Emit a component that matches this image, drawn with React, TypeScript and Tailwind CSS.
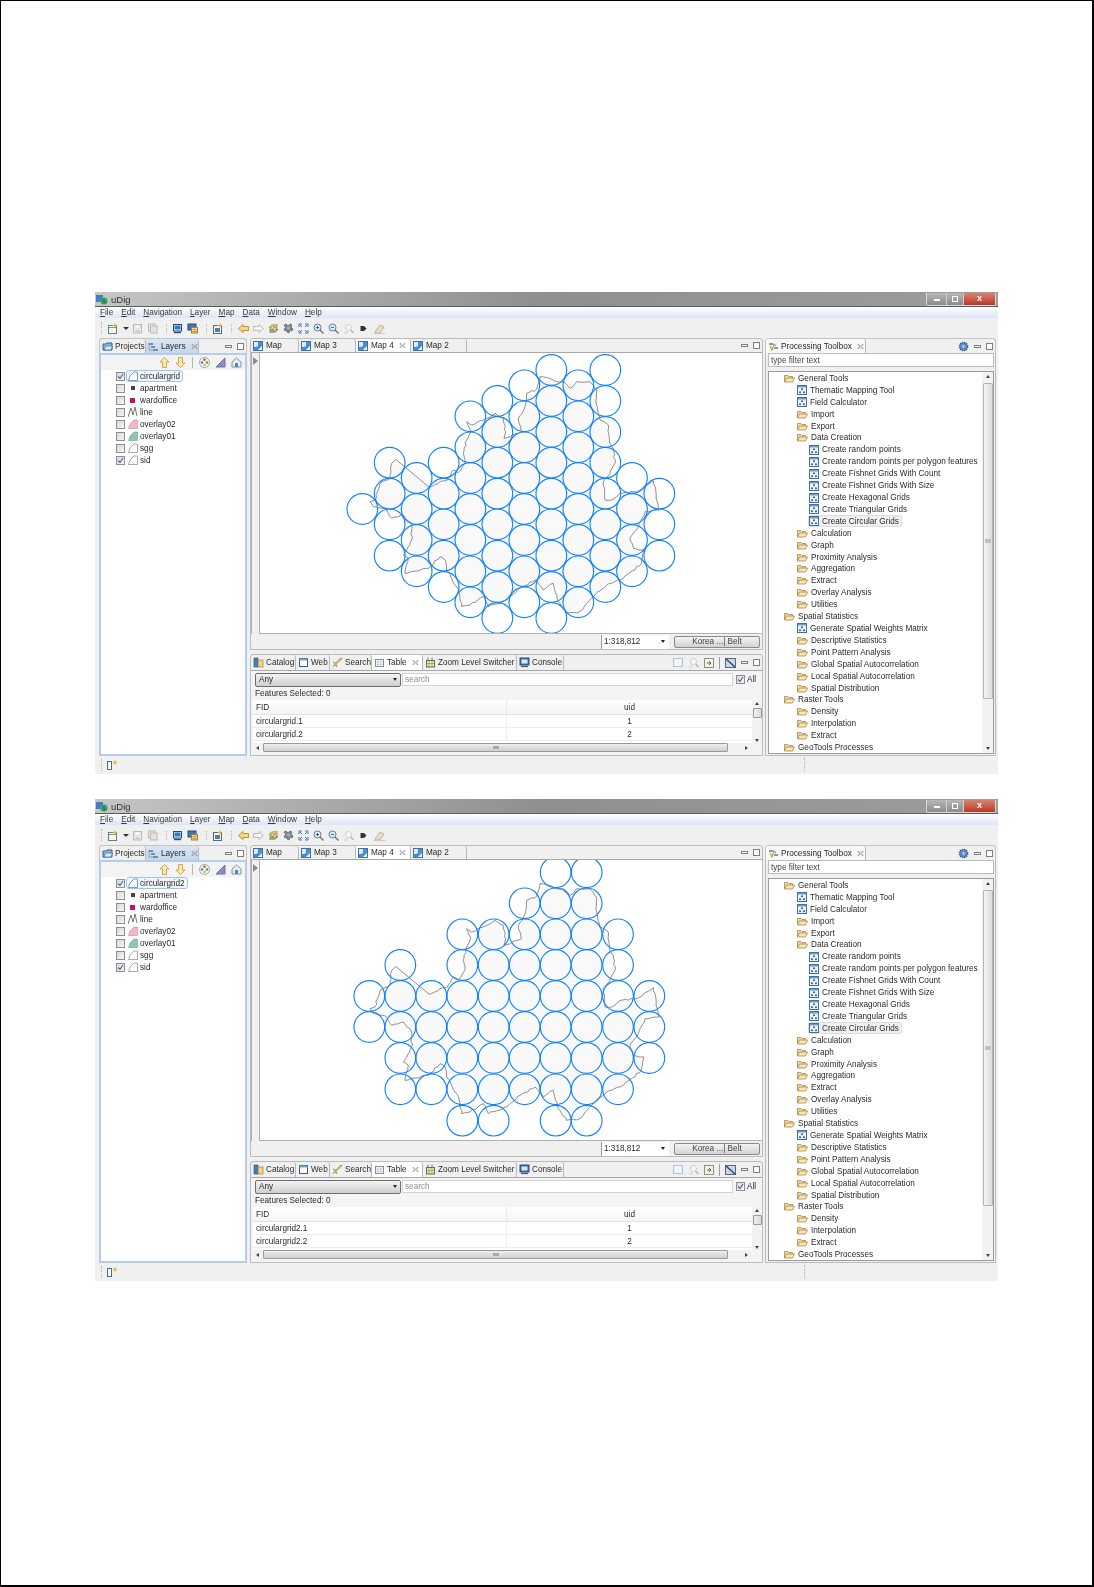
import React from "react";

const boundary: [number, number][] = [
  [167,358],[268,442],[300,425],[322,420],[340,390],[355,398],[375,368],[370,340],[380,300],[392,272],[380,245],[395,255],[430,240],[465,220],[490,235],[497,275],[492,295],[545,275],[535,235],[555,200],[560,160],[590,148],[600,110],[630,115],[650,125],[670,125],[690,145],[710,125],[750,125],[770,150],[770,195],[780,240],[805,255],[810,310],[820,325],[825,370],[810,400],[790,425],[795,480],[815,480],[840,460],[890,455],[940,422],[958,510],[915,515],[895,560],[870,595],[880,625],[912,630],[905,670],[850,715],[800,735],[760,770],[720,815],[680,820],[655,785],[640,730],[610,750],[585,720],[540,745],[500,780],[445,800],[430,770],[390,795],[365,800],[355,750],[320,690],[315,660],[300,650],[265,685],[195,700],[205,655],[190,645],[215,600],[215,555],[190,525],[155,535],[140,510],[100,500],[90,485],[105,480],[120,430],[150,415],[155,370],
];

function jagged(points: [number, number][]) {
  let d = `M${points[0][0]} ${points[0][1]}`;
  let seed = 1;
  for (let i = 0; i < points.length; i++) {
    const [x0, y0] = points[i];
    const [x1, y1] = points[(i + 1) % points.length];
    const len = Math.hypot(x1 - x0, y1 - y0);
    const steps = i === 0 ? 1 : Math.max(1, Math.round(len / 9));
    for (let s = 1; s <= steps; s++) {
      seed = (seed * 37 + 11) % 101;
      const t = s / steps;
      const j = s === steps ? 0 : (seed / 101 - 0.5) * 5;
      const nx = len ? -(y1 - y0) / len : 0;
      const ny = len ? (x1 - x0) / len : 0;
      d += `L${(x0 + (x1 - x0) * t + nx * j).toFixed(1)} ${(y0 + (y1 - y0) * t + ny * j).toFixed(1)}`;
    }
  }
  return d + "Z";
}
const boundaryPath = jagged(boundary);

const grid1: [number, number[]][] = [
  [67,[507]],
  [149,[368,461,553,647]],
  [230,[414,507,600,694]],
  [311,[368,461,553,647,741]],
  [391,[229,322,414,507,600,694,787]],
  [472,[183,276,368,461,553,647,741,834]],
  [553,[136,229,322,414,507,600,694,787]],
  [634,[90,183,276,368,461,553,647,741,834]],
  [715,[136,229,322,414,507,600,694,787]],
  [796,[90,183,276,368,461,553,647,741]],
  [876,[414,507,600,694]],
  [958,[461,553,647]],
];
const grid2: [number, number[]][] = [
  [88,[447,540]],
  [181,[354,447,540,633,727]],
  [274,[447,540,633,727]],
  [367,[262,354,447,540,633,727,821]],
  [461,[262,354,447,540,633,727,821]],
  [554,[169,262,354,447,540,633,727]],
  [647,[76,169,262,354,447,540,633,727,821]],
  [740,[76,169,262,354,447,540,633,727,821]],
  [834,[262,354,447,540,633,727]],
  [928,[447,540,633]],
];

function MapDrawing({ grid }: { grid: [number, number[]][] }) {
  return (
    <svg viewBox="0 0 1080 900" width={360} height={300} className="absolute left-[80px] top-[-13px]">
      <path d={boundaryPath} fill="#f9f9f9" stroke="#7c7c7c" strokeWidth={2.6} strokeLinejoin="round" />
      {grid.map(([x, ys]) =>
        ys.map((y) => <circle key={`${x}-${y}`} cx={x} cy={y} r={46} fill="none" stroke="#1483fa" strokeWidth={3.4} />)
      )}
    </svg>
  );
}

const MapIcon = () => (
  <svg width={11} height={10} viewBox="0 0 11 10" className="shrink-0">
    <rect x=".5" y=".5" width="9" height="9" fill="#fff" stroke="#4a6f96" />
    <path d="M1 9V6L5 5V1H9V5L5 9Z" fill="#3f92dc" />
    <path d="M1 1H5V5L1 6Z" fill="#dfeaf5" />
  </svg>
);
const Folder = () => (
  <svg width={11} height={9} viewBox="0 0 11 9" className="shrink-0">
    <path d="M.5 8V1.5H4L5 2.5H8.5V4" fill="#f2d89a" stroke="#a8874a" strokeWidth=".8" />
    <path d="M.5 8L2.5 4H10.5L8.5 8Z" fill="#f8e6b4" stroke="#a8874a" strokeWidth=".8" />
  </svg>
);
const ToolIcon = () => (
  <svg width={10} height={10} viewBox="0 0 10 10" className="shrink-0">
    <rect x=".5" y=".5" width="9" height="9" fill="#eef4fa" stroke="#3c70a4" />
    <rect x="1" y="1" width="8" height="1.5" fill="#6f9bc8" />
    <circle cx="5" cy="4.3" r="1" fill="#2b5c92" />
    <circle cx="3" cy="7.3" r="1" fill="#2b5c92" />
    <circle cx="7" cy="7.3" r="1" fill="#2b5c92" />
  </svg>
);
const Check = ({ on }: { on: boolean }) => (
  <span className="w-[9px] h-[9px] shrink-0 border border-[#8e8f8f] bg-gradient-to-br from-[#d8d8d8] to-[#f6f6f6] flex items-center justify-center">
    {on && (
      <svg width={7} height={7} viewBox="0 0 7 7">
        <path d="M1 3.5L3 5.5L6 1" fill="none" stroke="#4a5f97" strokeWidth="1.1" />
      </svg>
    )}
  </span>
);
const CloseX = () => (
  <svg width={7} height={7} viewBox="0 0 7 7" className="shrink-0">
    <path d="M1 1L3.5 3L6 1L6 2L4.2 3.5L6 5V6L3.5 4L1 6V5L2.8 3.5L1 2Z" fill="none" stroke="#8a8a8a" strokeWidth=".6" />
  </svg>
);
const MinMax = () => (
  <span className="flex items-center gap-[5px]">
    <span className="w-[7px] h-[3px] border border-[#7f7f7f] bg-white" />
    <span className="w-[7px] h-[7px] border border-[#7f7f7f] bg-white" />
  </span>
);
const Dots = () => <span className="w-0 h-[12px] border-l border-dotted border-[#b5b5b5] shrink-0" />;

/* Toolbar drawings */
const Ic = ({ children, w = 11 }: { children: React.ReactNode; w?: number }) => (
  <svg width={w} height={11} viewBox={`0 0 ${w} 11`} className="shrink-0">{children}</svg>
);
const NewIc = () => <Ic><rect x="1.5" y="2.5" width="8" height="8" fill="#fdf6d8" stroke="#5c7fa6" /><path d="M2 4.5H9" stroke="#6c93bb" /><path d="M8 0L9 2L11 2.5L9 3L8 5L7 3L5 2.5L7 2Z" fill="#e8b23c" /></Ic>;
const SaveIc = () => <Ic><rect x="1.5" y="1.5" width="8" height="8.5" fill="#ececec" stroke="#b9b9b9" /><rect x="3" y="2" width="5" height="3" fill="#fff" stroke="#c8c8c8" strokeWidth=".5" /><rect x="3.5" y="7" width="4" height="3" fill="#cfcfcf" /></Ic>;
const SaveAllIc = () => <Ic><rect x="1.5" y="1" width="6.5" height="7" fill="#ececec" stroke="#b9b9b9" /><rect x="3.5" y="3" width="6.5" height="7" fill="#e4e4e4" stroke="#b9b9b9" /></Ic>;
const MonIc = () => <Ic><rect x="1.5" y="1.5" width="8" height="6.5" fill="#eaf3fb" stroke="#1f4f85" /><rect x="2.5" y="2.5" width="6" height="4" fill="#3d78b5" /><path d="M2 9.5H9" stroke="#1f4f85" strokeWidth="1.4" /></Ic>;
const Mon2Ic = () => <Ic><rect x="1" y="1" width="8" height="6" fill="#3d78b5" stroke="#1f4f85" /><rect x="4.5" y="4.5" width="6" height="5.5" fill="#f4d98e" stroke="#a27f3a" /><path d="M5.5 6.5H9.5M5.5 8.5H9.5" stroke="#8b6d30" strokeWidth=".6" /></Ic>;
const TaskIc = () => <Ic><rect x="1.5" y="2.5" width="8" height="8" fill="#fff6cf" stroke="#506a8a" /><rect x="3" y="5" width="5" height="4" fill="#3e82c8" /><path d="M8 0L9 2L11 2.5L9 3L8 5L7 3L5 2.5L7 2Z" fill="#e8b23c" /></Ic>;
const BackIc = () => <Ic><path d="M.5 5.5L5 1.5V3.5H10.5V7.5H5V9.5Z" fill="#f8d97c" stroke="#b98a2c" strokeWidth=".9" /></Ic>;
const FwdIc = () => <Ic><path d="M10.5 5.5L6 1.5V3.5H.5V7.5H6V9.5Z" fill="#f3f3f3" stroke="#b4b4b4" strokeWidth=".9" /></Ic>;
const RefreshIc = () => <Ic><path d="M1 5C2 2 5 1 8 2L9 1V5H5L6.5 3.5C5 3 3.5 3.5 3 5Z" fill="#ecc25a" stroke="#9a7a2c" strokeWidth=".6" /><path d="M10 6C9 9 6 10 3 9L2 10V6H6L4.5 7.5C6 8 7.5 7.5 8 6Z" fill="#9fb06a" stroke="#6e7d3c" strokeWidth=".6" /></Ic>;
const CogIc = () => <Ic><path d="M1 2L3 1L5 3L7 1L9 2L8 4L10 6L9 8L7 7L6 10L4 9L4 7L2 8L1 6L3 5Z" fill="#7f8b93" stroke="#55606a" strokeWidth=".7" /><circle cx="5.5" cy="5" r="1.4" fill="#a8b4bc" /></Ic>;
const ExpandIc = () => <Ic><path d="M1 4V1H4M7 1H10V4M10 7V10H7M4 10H1V7M2 2L4 4M9 2L7 4M2 9L4 7M9 9L7 7" fill="none" stroke="#3a79bd" strokeWidth="1" /></Ic>;
const ZoomInIc = () => <Ic><circle cx="4.5" cy="4.5" r="3.5" fill="#dcebf8" stroke="#5e7f9e" /><path d="M3 4.5H6M4.5 3V6" stroke="#2b5c92" strokeWidth=".9" /><path d="M7 7L10.5 10.5" stroke="#7d7060" strokeWidth="1.4" /></Ic>;
const ZoomOutIc = () => <Ic><circle cx="4.5" cy="4.5" r="3.5" fill="#dcebf8" stroke="#5e7f9e" /><path d="M3 4.5H6" stroke="#2b5c92" strokeWidth=".9" /><path d="M7 7L10.5 10.5" stroke="#7d7060" strokeWidth="1.4" /></Ic>;
const ZoomSelIc = () => <Ic><circle cx="5.5" cy="4.5" r="3" fill="#f5f5f5" stroke="#a9a9a9" strokeDasharray="1 1" /><path d="M7.5 7L10.5 10" stroke="#b0b0b0" strokeWidth="1.2" /><path d="M1 10H4V7" fill="none" stroke="#b8b8b8" strokeDasharray="1 1" /></Ic>;
const TagIc = () => <Ic w={7}><path d="M.5 3H4L6.5 5.5L4 8H.5Z" fill="#333" /></Ic>;
const EraserIc = () => <Ic><path d="M1 9L6 2L10 4L6 10H2Z" fill="#e8dccb" stroke="#b4a48c" strokeWidth=".8" /><path d="M0 10.5H11" stroke="#cfc6b6" /></Ic>;
const Triangle = () => <Ic><path d="M1 10L10 1V10Z" fill="#8a8fc2" stroke="#6c70a6" /></Ic>;
const Palette = () => <Ic><circle cx="5.5" cy="5.5" r="5" fill="#f5f5f5" stroke="#9aa" /><circle cx="5.5" cy="2.8" r="1.2" fill="#e33" /><circle cx="3" cy="5.5" r="1.2" fill="#2a7de1" /><circle cx="8" cy="5.5" r="1.2" fill="#2cb34a" /><circle cx="5.5" cy="8" r="1.2" fill="#e5b825" /></Ic>;
const HouseIc = () => <Ic><path d="M1 5L5.5 1L10 5V10H1Z" fill="#e9eef4" stroke="#7f93a8" /><rect x="4" y="6" width="3" height="4" fill="#4d86c0" /></Ic>;
const ArrowUp = () => <Ic><path d="M5.5 .5L10 5H7.5V10.5H3.5V5H1Z" fill="#fbe7a6" stroke="#c29a3c" strokeWidth=".8" /></Ic>;
const ArrowDown = () => <Ic><path d="M5.5 10.5L10 6H7.5V.5H3.5V6H1Z" fill="#fbe7a6" stroke="#c29a3c" strokeWidth=".8" /></Ic>;
const LayersIc = () => <Ic><path d="M1 2H5V4H1ZM3 5H7V7H3ZM5 8H10V10H5Z" fill="#6f8faf" /><path d="M1 2V9H5" fill="none" stroke="#7a8a99" strokeWidth=".7" /></Ic>;
const ProjectsIc = () => <Ic><path d="M1 9V3H4L5 2H10V9Z" fill="#8bb6e2" stroke="#2f5f95" /><path d="M2 9L3.5 5H10.5L9 9Z" fill="#d5e6f7" stroke="#2f5f95" strokeWidth=".6" /></Ic>;
const CatalogIc = () => <Ic><rect x="1" y="1" width="4" height="9" fill="#4a7fb5" stroke="#1f4f85" strokeWidth=".6" /><rect x="5" y="3" width="5" height="7" fill="#f3d388" stroke="#8d7134" strokeWidth=".6" /></Ic>;
const WebIc = () => <Ic><rect x="1.5" y="1.5" width="8" height="8" fill="#fff" stroke="#3b5f88" /><rect x="1.5" y="1.5" width="8" height="2" fill="#7aa3cd" /></Ic>;
const SearchIc = () => <Ic><path d="M1 10L3 8L5 10L4 7L9 3L10 1L8 1.5L4 6L1 5L3 7Z" fill="#e5c46c" stroke="#a0803a" strokeWidth=".6" /></Ic>;
const TableIc = () => <Ic><rect x="1.5" y="2.5" width="8" height="7" fill="#fff" stroke="#7d8b99" /><path d="M1.5 5H9.5M1.5 7.3H9.5M4 2.5V9.5M6.7 2.5V9.5" stroke="#a7b3bf" strokeWidth=".6" /></Ic>;
const ZoomLvlIc = () => <Ic><rect x="1.5" y="3.5" width="8" height="6.5" fill="#f2e6b6" stroke="#6a6a48" /><path d="M1.5 6.5H9.5M4 3.5V10M7 3.5V10" stroke="#7c8a5c" strokeWidth=".6" /><path d="M3 .5V3M7 .5V3" stroke="#5b7aa0" /></Ic>;
const ConsoleIc = () => <Ic><rect x="1" y="1" width="9" height="7" fill="#3f72aa" stroke="#1f4f85" /><rect x="2.5" y="2.5" width="6" height="4" fill="#dbe9f6" /><path d="M2 9.5H9" stroke="#555" strokeWidth="1.2" /></Ic>;
const GearIc = () => <Ic><circle cx="5.5" cy="5.5" r="4" fill="#5f8fc9" stroke="#34639e" strokeDasharray="1.4 .7" strokeWidth="1.6" /><circle cx="5.5" cy="5.5" r="1.4" fill="#a7c7e8" /></Ic>;
const ProcIc = () => <Ic><path d="M1 2H5V4H1ZM6 6H10V8H6Z" fill="#6da0cf" /><path d="M2 5L4 9L6 3L8 5" fill="none" stroke="#c59a3a" strokeWidth="1.1" /></Ic>;

function Tab({ label, icon, w, active, close, tone }: { label: string; icon: React.ReactNode; w: string; active?: boolean; close?: boolean; tone?: string }) {
  return (
    <div className={`${w} h-full shrink-0 flex items-center gap-[2px] pl-[2px] border-r border-[#b8b8b8] rounded-tr-[3px] ${active ? (tone ?? "bg-white") : ""}`}>
      {icon}
      <span className="whitespace-nowrap">{label}</span>
      {close && <span className="ml-[3px]"><CloseX /></span>}
    </div>
  );
}

function Under({ t }: { t: string }) {
  return <span><span className="underline">{t[0]}</span>{t.slice(1)}</span>;
}

const layers: [string, React.ReactNode][] = [
  ["apartment", <span className="w-[4px] h-[4px] bg-[#444] mx-[3px]" />],
  ["wardoffice", <span className="w-[5px] h-[5px] bg-[#b8186c] mx-[3px]" />],
  ["line", <svg width={10} height={10} viewBox="0 0 10 10"><path d="M0 10L3 1L5 8L7 0L9 9" fill="none" stroke="#666" strokeWidth=".9" /></svg>],
  ["overlay02", <svg width={10} height={10} viewBox="0 0 10 10"><path d="M.5 9.5L2 5L6 1H9.5V9.5Z" fill="#f4b5cf" stroke="#a87" strokeWidth=".5" /></svg>],
  ["overlay01", <svg width={10} height={10} viewBox="0 0 10 10"><path d="M.5 9.5L2 5L6 1H9.5V9.5Z" fill="#8fc8a8" stroke="#789" strokeWidth=".5" /></svg>],
  ["sgg", <svg width={10} height={10} viewBox="0 0 10 10"><path d="M.5 9.5L2 5L6 1H9.5V9.5Z" fill="#fff" stroke="#888" strokeWidth=".7" /></svg>],
  ["sid", <svg width={10} height={10} viewBox="0 0 10 10"><path d="M.5 9.5L2 5L6 1H9.5V9.5Z" fill="#fff" stroke="#888" strokeWidth=".7" /></svg>],
];

const tree: [number, "f" | "t", string, boolean?][] = [
  [0,"f","General Tools"],[1,"t","Thematic Mapping Tool"],[1,"t","Field Calculator"],[1,"f","Import"],[1,"f","Export"],[1,"f","Data Creation"],
  [2,"t","Create random points"],[2,"t","Create random points per polygon features"],[2,"t","Create Fishnet Grids With Count"],[2,"t","Create Fishnet Grids With Size"],[2,"t","Create Hexagonal Grids"],[2,"t","Create Triangular Grids"],[2,"t","Create Circular Grids",true],
  [1,"f","Calculation"],[1,"f","Graph"],[1,"f","Proximity Analysis"],[1,"f","Aggregation"],[1,"f","Extract"],[1,"f","Overlay Analysis"],[1,"f","Utilities"],
  [0,"f","Spatial Statistics"],[1,"t","Generate Spatial Weights Matrix"],[1,"f","Descriptive Statistics"],[1,"f","Point Pattern Analysis"],[1,"f","Global Spatial Autocorrelation"],[1,"f","Local Spatial Autocorrelation"],[1,"f","Spatial Distribution"],
  [0,"f","Raster Tools"],[1,"f","Density"],[1,"f","Interpolation"],[1,"f","Extract"],[0,"f","GeoTools Processes"],
];
const indentClass = ["pl-[15px]", "pl-[28px]", "pl-[40px]"];

function UDigWindow({ layerName, grid }: { layerName: string; grid: [number, number[]][] }) {
  return (
    <div className="w-[903px] h-[482px] shrink-0 flex flex-col bg-[#f0f0f0] text-[#2a2a2a] text-[8.2px] leading-[11px] font-['Liberation_Sans',sans-serif] blur-[0.4px]">
      {/* title bar */}
      <div className="h-[15px] shrink-0 flex items-center pl-[1px] border-b border-[#5c5c5c] bg-gradient-to-r from-[#c6c6c6] via-[#8f8f8f] to-[#9d9d9d]">
        <svg width={12} height={11} viewBox="0 0 12 11">
          <rect x="0" y="1" width="7" height="7" fill="#3f7fc4" />
          <circle cx="8" cy="7" r="3.6" fill="#3da65a" />
          <path d="M6 6L10 8M8 4V10" stroke="#1f5f8a" strokeWidth=".7" />
        </svg>
        <span className="ml-[3px] text-[#333] text-[9.5px]">uDig</span>
        <div className="ml-auto mr-[2px] flex h-[13px] items-stretch rounded-b-[2px] border border-t-0 border-[#d8d8d8]">
          <div className="w-[19px] flex items-end justify-center pb-[4px] bg-gradient-to-b from-[#b8b8b8] to-[#8c8c8c]"><span className="w-[6px] h-[2px] bg-white" /></div>
          <div className="w-[18px] flex items-center justify-center border-x border-[#cfcfcf] bg-gradient-to-b from-[#b8b8b8] to-[#8c8c8c]"><span className="w-[6px] h-[6px] border border-white" /></div>
          <div className="w-[31px] flex items-center justify-center text-white text-[9px] font-bold bg-gradient-to-b from-[#d9826f] to-[#b8362a]">x</div>
        </div>
      </div>
      {/* menu */}
      <div className="h-[11px] shrink-0 flex items-center pl-[5px] gap-[8px] bg-gradient-to-b from-[#ffffff] to-[#dde4f6] text-[#3a3a3a]">
        {["File","Edit","Navigation","Layer","Map","Data","Window","Help"].map((m) => <Under key={m} t={m} />)}
      </div>
      {/* toolbar */}
      <div className="h-[20px] shrink-0 flex items-center pl-[6px]">
        <Dots />
        <span className="flex items-center gap-[5px] ml-[5px]"><NewIc /><span className="w-0 h-0 border-x-[3px] border-x-transparent border-t-[3px] border-t-[#333]" /></span>
        <span className="flex items-center gap-[4px] ml-[3px]"><SaveIc /><SaveAllIc /></span>
        <span className="ml-[8px]"><Dots /></span>
        <span className="flex items-center gap-[4px] ml-[5px]"><MonIc /><Mon2Ic /></span>
        <span className="ml-[8px]"><Dots /></span>
        <span className="ml-[5px]"><TaskIc /></span>
        <span className="ml-[8px]"><Dots /></span>
        <span className="flex items-center gap-[4px] ml-[6px]"><BackIc /><FwdIc /><RefreshIc /><CogIc /><ExpandIc /><ZoomInIc /><ZoomOutIc /><ZoomSelIc /></span>
        <span className="ml-[6px]"><TagIc /></span>
        <span className="ml-[7px]"><EraserIc /></span>
      </div>
      {/* panes */}
      <div className="h-[418px] shrink-0 flex pl-[4px]">
        {/* left */}
        <div className="w-[148px] shrink-0 flex flex-col">
          <div className="h-[15px] shrink-0 flex items-center rounded-t-[3px] border-x border-t border-[#c4c4c4]">
            <Tab w="w-[46px]" label="Projects" icon={<ProjectsIc />} />
            <Tab w="w-[53px]" label="Layers" icon={<LayersIc />} close active tone="bg-gradient-to-b from-[#d9e6f4] to-[#c3d7ec]" />
            <span className="ml-auto mr-[2px]"><MinMax /></span>
          </div>
          <div className="flex-1 border-2 border-[#b5cde8] bg-white flex flex-col">
            <div className="h-[15px] shrink-0 bg-[#f3f3f3] flex items-center justify-end pr-[3px] gap-[5px]">
              <ArrowUp /><ArrowDown /><span className="h-[11px] border-l border-[#b5b5b5] mx-[1px]" /><Palette /><Triangle /><HouseIc />
            </div>
            <div className="flex flex-col pl-[15px]">
              <div className="h-[12px] flex items-center gap-[1px]">
                <Check on />
                <span className="flex items-center gap-[2px] h-[12px] pl-[1px] pr-[2px] rounded-[3px] border border-[#9fc3ea] bg-[#f1f7fd]">
                  <svg width={10} height={10} viewBox="0 0 10 10"><path d="M.5 9.5L2 5L6 1H9.5V9.5Z" fill="#fff" stroke="#3f8fe0" strokeWidth=".8" /></svg>
                  <span>{layerName}</span>
                </span>
              </div>
              {layers.map(([name, ic], i) => (
                <div key={name} className="h-[12px] flex items-center gap-[1px]">
                  <Check on={i === 6} />
                  <span className="w-[11px] flex items-center justify-center ml-[1px]">{ic}</span>
                  <span className="ml-[1px]">{name}</span>
                </div>
              ))}
            </div>
          </div>
        </div>
        {/* center */}
        <div className="w-[513px] ml-[3px] shrink-0 flex flex-col gap-[4px]">
          <div className="h-[312px] shrink-0 flex flex-col border border-[#bcbcbc] rounded-t-[3px]">
            <div className="h-[14px] shrink-0 flex items-center border-b border-[#a8a8a8]">
              <Tab w="w-[48px]" label="Map" icon={<MapIcon />} />
              <Tab w="w-[57px]" label="Map 3" icon={<MapIcon />} />
              <Tab w="w-[55px]" label="Map 4" icon={<MapIcon />} close active />
              <Tab w="w-[56px]" label="Map 2" icon={<MapIcon />} />
              <span className="ml-auto mr-[2px]"><MinMax /></span>
            </div>
            <div className="flex-1 flex flex-col bg-white min-h-0">
              <div className="flex-1 flex min-h-0">
                <div className="w-[9px] shrink-0 flex justify-center pt-[4px] bg-[#f0f0f0] border-x border-[#b0b0b0]">
                  <span className="w-0 h-0 border-y-[4px] border-y-transparent border-l-[5px] border-l-[#8c8c8c]" />
                </div>
                <div className="flex-1 relative overflow-hidden bg-white border-b border-[#b0b0b0]">
                  <MapDrawing grid={grid} />
                </div>
              </div>
              <div className="h-[15px] shrink-0 bg-[#f0f0f0] flex items-center justify-end pr-[2px]">
                <div className="w-[68px] h-[14px] flex items-center justify-between px-[2px] bg-white border-l border-[#9a9a9a]">
                  <span>1:318,812</span>
                  <span className="w-0 h-0 border-x-[2.5px] border-x-transparent border-t-[3px] border-t-[#222] mr-[2px]" />
                </div>
                <div className="w-[86px] h-[12px] ml-[5px] flex items-center justify-center rounded-[2px] border border-[#8a8a8a] bg-gradient-to-b from-[#f4f4f4] to-[#d2d2d2] text-[#444]">Korea ...| Belt</div>
              </div>
            </div>
          </div>
          <div className="h-[102px] shrink-0 flex flex-col border border-[#bcbcbc] rounded-t-[3px]">
            <div className="h-[16px] shrink-0 flex items-center border-b border-[#a8a8a8]">
              <Tab w="w-[45px]" label="Catalog" icon={<CatalogIc />} />
              <Tab w="w-[34px]" label="Web" icon={<WebIc />} />
              <Tab w="w-[42px]" label="Search" icon={<SearchIc />} />
              <Tab w="w-[51px]" label="Table" icon={<TableIc />} close active />
              <Tab w="w-[94px]" label="Zoom Level Switcher" icon={<ZoomLvlIc />} />
              <Tab w="w-[47px]" label="Console" icon={<ConsoleIc />} />
              <span className="ml-auto flex items-center gap-[5px] mr-[2px]">
                <svg width={10} height={9} viewBox="0 0 10 9"><rect x=".5" y=".5" width="9" height="8" fill="#eef5fb" stroke="#6f8fb2" strokeDasharray="1 1" /></svg>
                <ZoomSelIc />
                <svg width={10} height={10} viewBox="0 0 10 10"><rect x=".5" y=".5" width="9" height="9" fill="#fbf3cf" stroke="#8a8f96" /><path d="M3 5H7M5 3L7 5L5 7" stroke="#2e6da8" fill="none" /></svg>
                <span className="h-[12px] border-l border-[#a0a0a0]" />
                <svg width={11} height={10} viewBox="0 0 11 10"><rect x=".5" y=".5" width="10" height="9" fill="#cdd6e0" stroke="#4f6a88" /><path d="M1 1L10 9" stroke="#28466a" strokeWidth="1.3" /></svg>
                <MinMax />
              </span>
            </div>
            <div className="flex-1 flex flex-col bg-[#f4f4f4] min-h-0">
              <div className="h-[15px] shrink-0 flex items-center pl-[4px] mt-[1px]">
                <div className="w-[146px] h-[14px] flex items-center justify-between pl-[3px] pr-[3px] rounded-[2px] border border-[#6f6f6f] bg-gradient-to-b from-[#f4f4f4] to-[#cfcfcf]">
                  <span>Any</span>
                  <span className="w-0 h-0 border-x-[2.5px] border-x-transparent border-t-[3px] border-t-[#222]" />
                </div>
                <div className="w-[331px] h-[13px] ml-[1px] flex items-center pl-[2px] bg-white border border-[#d4d4d4] text-[#8e8e8e]">search</div>
                <span className="ml-[3px] flex items-center gap-[2px]"><Check on /><span>All</span></span>
              </div>
              <div className="h-[13px] shrink-0 flex items-center pl-[4px]">Features Selected: 0</div>
              <div className="flex-1 flex min-h-0 pl-[2px]">
                <div className="w-[499px] shrink-0 flex flex-col bg-white">
                  <div className="h-[15px] shrink-0 flex items-center bg-gradient-to-b from-[#ffffff] to-[#f2f4f6] border-b border-[#e3e3e3]">
                    <div className="w-[254px] pl-[3px] border-r border-[#eaeaea] h-full flex items-center">FID</div>
                    <div className="flex-1 text-center">uid</div>
                  </div>
                  <div className="h-[13px] shrink-0 flex items-center border-b border-[#eeeeee]">
                    <div className="w-[254px] pl-[3px] h-full flex items-center border-r border-[#eeeeee]">{layerName}.1</div>
                    <div className="flex-1 text-center">1</div>
                  </div>
                  <div className="h-[13px] shrink-0 flex items-center border-b border-[#eeeeee]">
                    <div className="w-[254px] pl-[3px] h-full flex items-center border-r border-[#eeeeee]">{layerName}.2</div>
                    <div className="flex-1 text-center">2</div>
                  </div>
                </div>
                <div className="w-[10px] shrink-0 flex flex-col items-center bg-[#f2f2f2] h-[44px] pt-[2px]">
                  <span className="w-0 h-0 border-x-[2px] border-x-transparent border-b-[3px] border-b-[#444]" />
                  <span className="w-[9px] h-[10px] mt-[3px] border border-[#9a9a9a] rounded-[1px] bg-gradient-to-r from-[#f0f0f0] to-[#dcdcdc]" />
                  <span className="mt-auto mb-[2px] w-0 h-0 border-x-[2px] border-x-transparent border-t-[3px] border-t-[#444]" />
                </div>
              </div>
              <div className="h-[9px] shrink-0 flex items-center ml-[2px] mb-[3px] w-[499px] bg-[#f2f2f2]">
                <span className="ml-[3px] w-0 h-0 border-y-[2px] border-y-transparent border-r-[3px] border-r-[#444]" />
                <span className="ml-[4px] w-[465px] h-[9px] flex items-center justify-center rounded-[1px] border border-[#9a9a9a] bg-gradient-to-b from-[#eeeeee] to-[#cfcfcf]">
                  <span className="w-[6px] h-[3px] bg-[#aaaaaa]" />
                </span>
                <span className="ml-auto mr-[4px] w-0 h-0 border-y-[2px] border-y-transparent border-l-[3px] border-l-[#444]" />
              </div>
            </div>
          </div>
        </div>
        {/* right */}
        <div className="w-[231px] ml-[2px] shrink-0 flex flex-col">
          <div className="h-[15px] shrink-0 flex items-center border-x border-t border-[#c4c4c4] rounded-t-[3px]">
            <Tab w="w-[100px]" label="Processing Toolbox" icon={<ProcIc />} close active tone="bg-[#f8f8f8]" />
            <span className="ml-auto flex items-center gap-[5px] mr-[2px]"><GearIc /><MinMax /></span>
          </div>
          <div className="flex-1 flex flex-col border-x border-b border-[#bcbcbc] pl-[2px] pr-[1px] pb-[1px] bg-[#f0f0f0] min-h-0">
            <div className="h-[14px] shrink-0 flex items-center pl-[2px] bg-white border border-[#bcbcbc] text-[#444]">type filter text</div>
            <div className="flex-1 mt-[4px] flex bg-white border border-[#9c9c9c] min-h-0 overflow-hidden">
              <div className="flex-1 min-w-0 flex flex-col pt-[0.5px]">
                {tree.map(([lvl, kind, label, sel], i) => (
                  <div key={i} className={`h-[11.92px] shrink-0 flex items-center ${indentClass[lvl]}`}>
                    <span className={`flex items-center gap-[3px] ${sel ? "h-[11.92px] bg-[#f0f0f0] border border-[#dcdcdc] rounded-[2px] -ml-[1px] pr-[2px]" : ""}`}>
                      {kind === "f" ? <Folder /> : <ToolIcon />}
                      <span className="whitespace-nowrap">{label}</span>
                    </span>
                  </div>
                ))}
              </div>
              <div className="w-[11px] shrink-0 flex flex-col items-center bg-[#f2f2f2] pt-[3px] pb-[3px]">
                <span className="w-0 h-0 border-x-[2.5px] border-x-transparent border-b-[3px] border-b-[#444]" />
                <span className="w-[10px] h-[316px] mt-[5px] flex items-center justify-center border border-[#b4b4b4] rounded-[1px] bg-gradient-to-r from-[#f4f4f4] to-[#dcdcdc]">
                  <span className="w-[6px] h-[4px] bg-[#c0c0c0]" />
                </span>
                <span className="mt-auto w-0 h-0 border-x-[2.5px] border-x-transparent border-t-[3px] border-t-[#444]" />
              </div>
            </div>
          </div>
        </div>
      </div>
      {/* status */}
      <div className="flex-1 flex items-center pl-[6px]">
        <Dots />
        <svg width={12} height={10} viewBox="0 0 12 10" className="ml-[5px]">
          <rect x=".5" y="1.5" width="4" height="8" fill="#fff" stroke="#4a6f96" />
          <path d="M8 0L9 2L11 2.5L9 3L8 5L7 3L5 2.5L7 2Z" fill="#e8b23c" />
        </svg>
        <span className="ml-[685px] h-[14px] border-l border-dotted border-[#b5b5b5]" />
      </div>
    </div>
  );
}

export default function App() {
  return (
    <div className="w-[1094px] h-[1587px] box-border bg-white border-t border-l border-r-2 border-b-2 border-black pt-[291px] pl-[94px] flex flex-col gap-[25px]">
      <UDigWindow layerName="circulargrid" grid={grid1} />
      <UDigWindow layerName="circulargrid2" grid={grid2} />
    </div>
  );
}
